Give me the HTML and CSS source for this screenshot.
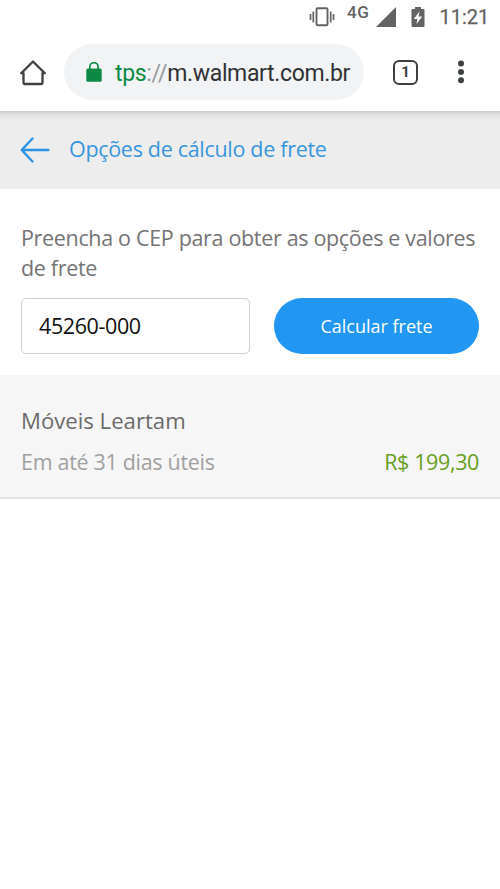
FILE: index.html
```html
<!DOCTYPE html>
<html lang="pt-BR">
<head>
<meta charset="utf-8">
<title>Opções de cálculo de frete</title>
<link rel="stylesheet" href="styles.css">
</head>
<body>
<div class="status">
  <svg class="vibrate" width="26" height="20" viewBox="0 0 26 20" fill="none" stroke="#636363"><rect x="7.5" y="1.300" width="11" height="17" rx="1" stroke-width="1.900"/><path d="M4.300 4.500v11M21.700 4.500v11M1.500 7v6M24.500 7v6" stroke-width="1.700"/></svg>
  <span class="network">4G</span>
  <svg class="signal" width="20" height="20" viewBox="0 0 20 20"><path d="M0 20L20 0v20z" fill="#636363"/></svg>
  <svg class="battery" width="14" height="20" viewBox="0 0 14 20"><path d="M4 0h6v2h2.500q1 0 1 1v16q0 1-1 1h-11q-1 0-1-1V3q0-1 1-1H4z" fill="#636363"/><path d="M8.500 4.500L2.800 12h3.600L5.500 17l5.700-7.500H7.500z" fill="#fff"/></svg>
  <span class="clock">11:21</span>
</div>
<div class="toolbar">
  <svg class="home" width="26" height="26" viewBox="0 0 26 26" fill="none" stroke="#3c4043" stroke-width="2.300" stroke-linejoin="round"><path d="M1.200 13.200L13 1.500l11.800 11.700H22.500V23q0 1-1 1H4.500q-1 0-1-1v-9.800z"/></svg>
  <div class="address">
    <svg class="lock" width="16" height="20" viewBox="0 0 16 20"><path d="M3.800 8V4.900a4.200 4.200 0 0 1 8.400 0V8" fill="none" stroke="#0c8a43" stroke-width="1.700"/><rect x=".3" y="6.500" width="15.400" height="13.200" rx="1.500" fill="#0c8a43"/></svg>
    <span class="url"><span class="scheme">tps</span><span class="slashes">://</span>m.walmart.com.br</span>
  </div>
  <div class="tabs">1</div>
  <svg class="menu" width="6" height="24" viewBox="0 0 6 24" fill="#3c4043"><circle cx="3" cy="3.500" r="3"/><circle cx="3" cy="11.900" r="3"/><circle cx="3" cy="20.300" r="3"/></svg>
</div>
<header class="header">
  <svg class="back" width="31" height="26" viewBox="0 0 31 26" fill="none" stroke="#2b93e4" stroke-width="2.400" stroke-linecap="round" stroke-linejoin="round"><path d="M28.300 13H2M12.500 1.500L1.700 13l10.800 11.500"/></svg>
  <h1 class="title">Opções de cálculo de frete</h1>
</header>
<main>
  <section class="form">
    <p class="prompt">Preencha o CEP para obter as opções e valores<br>de frete</p>
    <div class="fields">
      <input class="cep" type="text" value="45260-000" aria-label="CEP">
      <button class="submit" type="button">Calcular frete</button>
    </div>
  </section>
  <section class="result">
    <h2 class="seller">Móveis Leartam</h2>
    <div class="quote"><span class="delivery">Em até 31 dias úteis</span><span class="price">R$ 199,30</span></div>
  </section>
</main>
</body>
</html>
```
FILE: styles.css
```css
* { box-sizing: border-box; }
body { margin: 0; min-height: 889px; background: #fff; font-family: "Open Sans", "Noto Sans", sans-serif; white-space: nowrap; }
svg { display: block; flex: none; }
h1, h2, p { margin: 0; font-weight: 400; }
.status { display: flex; height: 36px; padding: 7px 12px 0 309px; color: #636363; font-family: Roboto, sans-serif; }
.network { margin: -5px 0 0 12px; width: 24px; font-size: 17px; font-weight: 500; line-height: 20px; letter-spacing: .6px; }
.signal { margin-left: 6px; }
.battery { margin-left: 15px; }
.signal, .battery { transform: translateX(1px); }
.clock { margin: 0 0 0 15px; font-size: 20px; font-weight: 400; line-height: 20px; -webkit-text-stroke: .25px #636363; }
.toolbar { display: flex; align-items: center; height: 75px; padding: 0 36px 0 20px; font-family: Roboto, sans-serif; }
.home { margin-top: -2px; }
.address { display: flex; align-items: center; width: 300px; height: 56px; margin: -3px 0 0 18px; padding-left: 22px; border-radius: 28px; background: #f1f3f4; }
.url { margin: 3px 0 0 13px; color: #303235; font-size: 23px; line-height: 28px; letter-spacing: -.35px; }
.scheme { color: #0c8a43; }
.slashes { color: #96999b; }
.tabs { width: 25px; height: 25px; margin: -3px 0 0 29px; border: 2.500px solid #3c4043; border-radius: 6px; color: #3c4043; font-size: 15px; font-weight: 700; line-height: 21px; text-align: center; }
.menu { margin: -3px 0 0 40px; }
.header { display: flex; align-items: center; height: 78px; padding-left: 20px; background: linear-gradient(#cbcbcb, #e2e2e2 4px, #ededed 9px); }
.title { margin: -2px 0 0 18px; color: #3896dc; font-size: 21.500px; line-height: 30px; letter-spacing: -.31px; }
.form { height: 186px; padding: 34px 21px 0; }
.prompt { color: #747474; font-size: 21.500px; line-height: 30px; letter-spacing: -.33px; }
.fields { display: flex; gap: 24px; margin-top: 15px; }
.cep { width: 229px; height: 56px; padding: 0 17px 2px; border: 1.500px solid #cecece; border-radius: 5px; background: #fff; color: #111; font: 21.500px "Open Sans", sans-serif; letter-spacing: -.4px; }
.submit { width: 205px; height: 56px; padding: 0; border: 0; border-radius: 28px; background: #2196f3; color: #fff; font: 18px "Open Sans", sans-serif; }
.result { height: 124px; padding: 30px 21px 0; border-bottom: 2px solid #e3e3e3; background: #f6f6f6; }
.seller { color: #6b6b6b; font-size: 22.150px; line-height: 30px; }
.quote { display: flex; justify-content: space-between; margin-top: 12px; font-size: 21.500px; line-height: 30px; letter-spacing: -.31px; }
.delivery { color: #a0a0a0; }
.price { color: #68a01d; letter-spacing: -.37px; }
```
